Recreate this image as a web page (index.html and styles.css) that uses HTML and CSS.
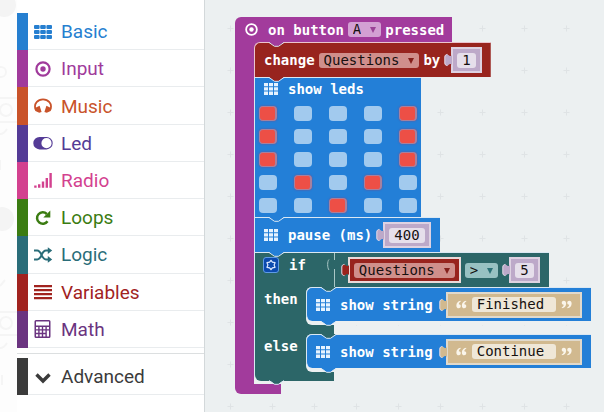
FILE: index.html
```html
<!DOCTYPE html>
<html lang="en">
<head>
<meta charset="utf-8">
<title>Block editor</title>
<link rel="stylesheet" href="styles.css">
</head>
<body>
<svg class="defs" aria-hidden="true">
  <defs>
    <symbol id="grid" viewBox="0 0 18 14">
      <path d="M1 0h3.600a1 1 0 0 1 1 1v2a1 1 0 0 1-1 1H1a1 1 0 0 1-1-1V1a1 1 0 0 1 1-1zm6.200 0h3.600a1 1 0 0 1 1 1v2a1 1 0 0 1-1 1H7.200a1 1 0 0 1-1-1V1a1 1 0 0 1 1-1zm6.200 0H17a1 1 0 0 1 1 1v2a1 1 0 0 1-1 1h-3.600a1 1 0 0 1-1-1V1a1 1 0 0 1 1-1zM1 5h3.600a1 1 0 0 1 1 1v2a1 1 0 0 1-1 1H1a1 1 0 0 1-1-1V6a1 1 0 0 1 1-1zm6.200 0h3.600a1 1 0 0 1 1 1v2a1 1 0 0 1-1 1H7.200a1 1 0 0 1-1-1V6a1 1 0 0 1 1-1zm6.200 0H17a1 1 0 0 1 1 1v2a1 1 0 0 1-1 1h-3.600a1 1 0 0 1-1-1V6a1 1 0 0 1 1-1zM1 10h3.600a1 1 0 0 1 1 1v2a1 1 0 0 1-1 1H1a1 1 0 0 1-1-1v-2a1 1 0 0 1 1-1zm6.200 0h3.600a1 1 0 0 1 1 1v2a1 1 0 0 1-1 1H7.200a1 1 0 0 1-1-1v-2a1 1 0 0 1 1-1zm6.200 0H17a1 1 0 0 1 1 1v2a1 1 0 0 1-1 1h-3.600a1 1 0 0 1-1-1v-2a1 1 0 0 1 1-1z"/>
    </symbol>
    <symbol id="cells" viewBox="0 0 14 12">
      <path d="M0 0h4v3.300H0zM5 0h4v3.300H5zM10 0h4v3.300h-4zM0 4.300h4v3.300H0zM5 4.300h4v3.300H5zM10 4.300h4v3.300h-4zM0 8.600h4V12H0zM5 8.600h4V12H5zM10 8.600h4V12h-4z"/>
    </symbol>
    <symbol id="target" viewBox="0 0 16 16">
      <circle cx="8" cy="8" r="6.600" fill="none" stroke="currentColor" stroke-width="2.200"/>
      <circle cx="8" cy="8" r="2.700"/>
    </symbol>
    <symbol id="notch" viewBox="0 0 17 5">
      <path d="M1 0L6.500 4H10.500L16 0z"/>
      <path class="notch-line" d="M1 .5L6.500 4.300H10.500L16 .5"/>
    </symbol>
    <symbol id="plug" viewBox="0 0 8 14">
      <path d="M8 1.500V12.500C7.500 10.500 5.500 10.500 4.500 12C2.500 13.500 .8 12 .8 10V4C.8 2 2.500 .5 4.500 2C5.500 3.500 7.500 3.500 8 1.500z"/>
      <path class="plug-line" d="M3.500 12.600C1.800 12.600 .8 11.500 .8 10V4C.8 2.500 1.800 1.400 3.500 1.400"/>
    </symbol>
    <symbol id="open-quote" viewBox="0 0 12 9">
      <path d="M5 .3C2 .8 .4 2.800 .4 5.500C.4 7.500 1.300 8.600 2.900 8.600C4.200 8.600 5.200 7.700 5.200 6.400C5.200 5.100 4.300 4.300 3.100 4.300C3.200 2.900 3.800 2 5.300 1.300zM11 .3C8 .8 6.400 2.800 6.400 5.500C6.400 7.500 7.300 8.600 8.900 8.600C10.200 8.600 11.200 7.700 11.200 6.400C11.200 5.100 10.300 4.300 9.100 4.300C9.200 2.900 9.800 2 11.300 1.300z"/>
    </symbol>
    <pattern id="crosses" x="4" y="7" width="42" height="42" patternUnits="userSpaceOnUse">
      <path d="M18.500 21.500h6M21.500 18.500v6" stroke="#dfe3e5" stroke-width="1" fill="none"/>
    </pattern>
  </defs>
</svg>

<div class="app">
  <div class="simulator" aria-hidden="true">
    <svg viewBox="0 0 17 412" width="17" height="412">
      <g fill="#f4f4f4">
        <circle cx="4" cy="5" r="12"/>
        <circle cx="2" cy="219" r="12"/>
      </g>
      <g fill="none" stroke="#f5f5f5" stroke-width="2">
        <circle cx="1" cy="72" r="5"/>
        <path d="M0 98h17M0 122h17M0 312h17M0 335h17M0 160v10M2 375v10"/>
        <circle cx="6" cy="110" r="6"/>
        <circle cx="6" cy="323" r="6"/>
        <path d="M0 134q4 0 7-5M0 348q4 0 7-5M0 286l5-6"/>
      </g>
    </svg>
  </div>

  <nav class="toolbox" aria-label="Block categories">
    <div class="categories">
      <button class="category basic"><svg class="icon" viewBox="-1 -2 20 18"><use href="#grid" width="18" height="14"/></svg>Basic</button>
      <button class="category input"><svg class="icon" viewBox="-2 -1 20 18"><use href="#target" width="16" height="16"/></svg>Input</button>
      <button class="category music"><svg class="icon" viewBox="0 0 20 18"><path d="M3.200 13.500C1.500 11.500 1.500 7.500 3.600 5.200C6.800 1.400 13.200 1.400 16.400 5.200C18.500 7.500 18.500 11.500 16.800 13.500" fill="none" stroke="currentColor" stroke-width="1.800"/><path d="M3 10.500L6.600 8.800L8.600 15L6.200 15.800L2.400 14zM17 10.500L13.400 8.800L11.400 15L13.800 15.800L17.600 14z"/></svg>Music</button>
      <button class="category led"><svg class="icon" viewBox="0 0 20 18"><path fill-rule="evenodd" d="M6.500 3h7a6.200 6.200 0 0 1 0 12.400h-7a6.200 6.200 0 0 1 0-12.400zM13.500 4.100a5.100 5.100 0 1 0 0 10.200a5.100 5.100 0 0 0 0-10.200z"/></svg>Led</button>
      <button class="category radio"><svg class="icon" viewBox="0 0 20 18"><path d="M1.200 14.500h2.400v2.200H1.200zM5 13.200h2.400v3.500H5zM8.800 10.500h2.400v6.200H8.800zM12.600 7h2.400v9.700h-2.400zM16.400 2h2.400v14.700h-2.400z"/></svg>Radio</button>
      <button class="category loops"><svg class="icon" viewBox="0 0 20 18"><path d="M14.500 12.200A5.700 5.700 0 1 1 13.800 5" fill="none" stroke="currentColor" stroke-width="2.500"/><path d="M17.300 1.500V8.400H10.300z"/></svg>Loops</button>
      <button class="category logic"><svg class="icon" viewBox="0 0 20 18"><path d="M1 4.600H4.200C8.800 4.600 8.200 13.400 13 13.400H15.500M1 13.400H4.200C8.800 13.400 8.200 4.600 13 4.600H15.500" fill="none" stroke="currentColor" stroke-width="2"/><path d="M14.800 1.300L19.200 4.600L14.800 7.900zM14.800 10.100L19.200 13.400L14.800 16.700z"/></svg>Logic</button>
      <button class="category variables"><svg class="icon" viewBox="0 0 20 18"><path d="M1 2h18v2.300H1zM1 6h18v2.300H1zM1 10h18v2.300H1zM1 14h18v2.300H1z"/></svg>Variables</button>
      <button class="category math"><svg class="icon" viewBox="0 0 20 18"><path fill-rule="evenodd" d="M3 0h13a1.500 1.500 0 0 1 1.500 1.500v15A1.500 1.500 0 0 1 16 18H3a1.500 1.500 0 0 1-1.500-1.500v-15A1.500 1.500 0 0 1 3 0zM3 1.500v4h13v-4zM3 7v2.200h2.200V7zM6.600 7v2.200h2.200V7zM10.200 7v2.200h2.200V7zM13.800 7v2.200H16V7zM3 10.600v2.200h2.200v-2.200zM6.600 10.600v2.200h2.200v-2.200zM10.200 10.600v2.200h2.200v-2.200zM3 14.300v2.200h2.200v-2.200zM6.600 14.300v2.200h2.200v-2.200zM10.200 14.300v2.200h2.200v-2.200zM13.800 10.600v5.900H16v-5.900z"/></svg>Math</button>
    </div>
    <div class="more">
      <button class="category advanced"><svg class="icon" viewBox="0 0 20 18"><path d="M3.500 6.500L10 13L16.500 6.500" fill="none" stroke="currentColor" stroke-width="3.400"/></svg>Advanced</button>
    </div>
  </nav>

  <main class="workspace">
    <svg class="backdrop" aria-hidden="true"><rect width="100%" height="100%" fill="url(#crosses)"/></svg>

    <section class="event">
      <div class="event-head">
        <svg class="head-icon" viewBox="0 0 16 16" aria-hidden="true"><use href="#target" width="16" height="16"/></svg>
        <span>on button</span>
        <span class="pick"><select class="field" aria-label="Button"><option>A</option></select></span>
        <span>pressed</span>
      </div>

      <div class="mouth event-body">
        <div class="block change">
          <svg class="notch from-event" aria-hidden="true"><use href="#notch"/></svg>
          <span>change</span>
          <span class="pick"><select class="field" aria-label="Variable to change"><option>Questions</option></select></span>
          <span>by</span>
          <span class="value number"><svg class="plug" aria-hidden="true"><use href="#plug"/></svg><span class="socket"><input class="field" type="text" value="1" aria-label="Change amount"></span></span>
        </div>

        <div class="leds">
          <svg class="notch from-change" aria-hidden="true"><use href="#notch"/></svg>
          <div class="leds-title"><svg class="cells" aria-hidden="true"><use href="#cells"/></svg><span>show leds</span></div>
          <div class="matrix">
            <input type="checkbox" aria-label="LED 0,0" checked><input type="checkbox" aria-label="LED 1,0"><input type="checkbox" aria-label="LED 2,0"><input type="checkbox" aria-label="LED 3,0"><input type="checkbox" aria-label="LED 4,0" checked>
            <input type="checkbox" aria-label="LED 0,1" checked><input type="checkbox" aria-label="LED 1,1"><input type="checkbox" aria-label="LED 2,1"><input type="checkbox" aria-label="LED 3,1"><input type="checkbox" aria-label="LED 4,1" checked>
            <input type="checkbox" aria-label="LED 0,2" checked><input type="checkbox" aria-label="LED 1,2"><input type="checkbox" aria-label="LED 2,2"><input type="checkbox" aria-label="LED 3,2"><input type="checkbox" aria-label="LED 4,2" checked>
            <input type="checkbox" aria-label="LED 0,3"><input type="checkbox" aria-label="LED 1,3" checked><input type="checkbox" aria-label="LED 2,3"><input type="checkbox" aria-label="LED 3,3" checked><input type="checkbox" aria-label="LED 4,3">
            <input type="checkbox" aria-label="LED 0,4"><input type="checkbox" aria-label="LED 1,4"><input type="checkbox" aria-label="LED 2,4" checked><input type="checkbox" aria-label="LED 3,4"><input type="checkbox" aria-label="LED 4,4">
          </div>
        </div>

        <div class="block action">
          <svg class="notch from-action" aria-hidden="true"><use href="#notch"/></svg>
          <svg class="cells" aria-hidden="true"><use href="#cells"/></svg>
          <span>pause (ms)</span>
          <span class="value number"><svg class="plug" aria-hidden="true"><use href="#plug"/></svg><span class="socket"><input class="field" type="text" value="400" aria-label="Pause in milliseconds"></span></span>
        </div>

        <div class="branch">
          <div class="block condition">
            <svg class="notch from-action" aria-hidden="true"><use href="#notch"/></svg>
            <span class="if-label">
              <button class="gear" aria-label="Edit branches"><svg viewBox="0 0 15 15" aria-hidden="true"><path d="M7.500 2.500L9 4.500L11.800 5L10.800 7.500L11.800 10L9 10.500L7.500 12.500L6 10.500L3.200 10L4.200 7.500L3.200 5L6 4.500z" fill="#0b4aae" stroke="#dce9ff" stroke-width="1.300" stroke-linejoin="round"/></svg></button>
              <span>if</span>
            </span>
            <svg class="slot" viewBox="0 0 10 34" aria-hidden="true"><path d="M9.500 0V7M9.500 16V34M4 6.500C2.200 8 2.200 15 4 17" fill="none" stroke="#a9c7c6" stroke-width="1"/></svg>
            <span class="value variable"><svg class="plug" aria-hidden="true"><use href="#plug"/></svg><span class="socket"><span class="pick"><select class="field" aria-label="Variable to compare"><option>Questions</option></select></span></span></span>
            <span class="pick compare"><select class="field" aria-label="Comparison"><option>&gt;</option></select></span>
            <span class="value number"><svg class="plug" aria-hidden="true"><use href="#plug"/></svg><span class="socket"><input class="field" type="text" value="5" aria-label="Compared number"></span></span>
          </div>

          <div class="arm">
            <span class="arm-label">then</span>
            <div class="mouth">
              <div class="block action">
                <svg class="notch from-branch" aria-hidden="true"><use href="#notch"/></svg>
                <svg class="cells" aria-hidden="true"><use href="#cells"/></svg>
                <span>show string</span>
                <span class="value string"><svg class="plug" aria-hidden="true"><use href="#plug"/></svg><span class="socket"><svg class="quote" aria-hidden="true"><use href="#open-quote"/></svg><input class="field" type="text" value="Finished" aria-label="String when true"><svg class="quote close" aria-hidden="true"><use href="#open-quote"/></svg></span></span>
              </div>
              <svg class="tab from-action" aria-hidden="true"><use href="#notch"/></svg>
            </div>
          </div>
          <div class="lip"></div>

          <div class="arm">
            <span class="arm-label">else</span>
            <div class="mouth">
              <div class="block action">
                <svg class="notch from-branch" aria-hidden="true"><use href="#notch"/></svg>
                <svg class="cells" aria-hidden="true"><use href="#cells"/></svg>
                <span>show string</span>
                <span class="value string"><svg class="plug" aria-hidden="true"><use href="#plug"/></svg><span class="socket"><svg class="quote" aria-hidden="true"><use href="#open-quote"/></svg><input class="field" type="text" value="Continue" aria-label="String when false"><svg class="quote close" aria-hidden="true"><use href="#open-quote"/></svg></span></span>
              </div>
              <svg class="tab from-action" aria-hidden="true"><use href="#notch"/></svg>
            </div>
          </div>
          <div class="lip last"></div>
        </div>
        <svg class="tab from-branch" aria-hidden="true"><use href="#notch"/></svg>
      </div>
      <div class="event-foot"></div>
    </section>
  </main>
</div>
</body>
</html>
```
FILE: styles.css
```css
:root {
  --purple: #a23b9c;
  --blue: #237fd7;
  --red: #98241e;
  --teal: #2c6668;
  --canvas: #ecf0f1;
}

* { box-sizing: border-box; }

body {
  margin: 0;
  background: #fdfdfd;
}

button, input, select { margin: 0; font: inherit; }

.defs { position: absolute; width: 0; height: 0; }

.app { display: flex; min-height: 100vh; overflow: hidden; }

.simulator { flex: none; width: 17px; height: 100vh; overflow: hidden; }
.simulator svg { display: block; }

/* Toolbox */
.toolbox {
  flex: none;
  width: 187px;
  padding-top: 13px;
  background: #fff;
  font-family: Roboto, "Liberation Sans", sans-serif;
  font-size: 19px;
}

.categories {
  display: grid;
  grid-auto-rows: 1fr;
  height: 335px;
}

.more {
  margin-top: 5px;
  padding-top: 4px;
  border-top: 1px solid #dcdfe0;
}

.category {
  display: flex;
  align-items: center;
  gap: 8px;
  width: 100%;
  min-height: 37px;
  padding: 0 6px 0 5px;
  border: 0;
  border-left: 11px solid var(--tone);
  background: linear-gradient(#e9ecee, #e9ecee) bottom / 100% 1px no-repeat #fff;
  color: var(--tone);
  text-align: left;
}

.icon { width: 20px; height: 18px; fill: currentColor; }

.basic { --tone: #267fd0; }
.input { --tone: #a03a9b; }
.music { --tone: #c9532a; }
.led { --tone: #543b96; }
.radio { --tone: #d3418f; }
.loops { --tone: #3b7c12; }
.logic { --tone: #2a6d79; }
.variables { --tone: #a1231f; }
.math { --tone: #6b3480; }
.advanced { --tone: #3b3b3b; }

/* Workspace */
.workspace {
  position: relative;
  flex: 1;
  min-width: 0;
  padding: 17px 0 0 30px;
  border-left: 1px solid #d3d8da;
  background: var(--canvas);
  color: #fff;
  font: bold 14px/16px "DejaVu Sans Mono", monospace;
  white-space: nowrap;
}

.backdrop { position: absolute; inset: 0; width: 100%; height: 100%; }

.event {
  position: relative;
  display: flex;
  flex-direction: column;
  align-items: flex-start;
  width: max-content;
}

.event-head {
  display: flex;
  align-items: center;
  gap: 4px;
  height: 25px;
  padding: 0 8px 0 10px;
  border-radius: 6px 0 0 0;
  background: var(--purple);
}

.head-icon { width: 13px; height: 13px; margin-right: 6px; fill: currentColor; }

.event-body { border-left: 19px solid var(--purple); padding-bottom: 3px; }
.event-foot { width: 46px; height: 10px; border-radius: 0 0 0 6px; background: var(--purple); }

.mouth {
  position: relative;
  display: flex;
  flex-direction: column;
  align-items: flex-start;
}

.block {
  position: relative;
  display: flex;
  align-items: center;
  gap: 4px;
  height: 35px;
  padding: 0 9px;
  border-top: 1px solid #dbe8f3;
  border-left: 1px solid #dbe8f3;
}

.change {
  background: var(--red);
  border-color: #ecc4cf;
  border-top-left-radius: 6px;
  box-shadow: -3px -3px 0 var(--purple);
  clip-path: inset(0);
}
.action { background: var(--blue); }

.cells { flex: none; width: 14px; height: 12px; margin-right: 6px; fill: #e6f3ff; }

.notch, .tab { position: absolute; width: 17px; height: 5px; }
.notch { left: 13px; top: -1px; }
.tab { left: 14px; bottom: -1px; }
.notch-line { fill: none; stroke: #dbe8f3; stroke-width: 1; }
.tab.from-action { color: var(--blue); }
.from-event { fill: var(--purple); }
.from-change { fill: var(--red); }
.from-action { fill: var(--blue); }
.from-branch { fill: var(--teal); }

/* Fields */
.field {
  display: block;
  height: 15px;
  padding: 0 5px;
  border: 0;
  border-radius: 3px;
  color: #16100f;
  font-weight: normal;
  line-height: 15px;
  field-sizing: content;
}

select.field { appearance: none; padding-right: 20px; background: #d08f8b; }

.pick { position: relative; --caret: #84201c; }
.pick::after {
  content: "";
  position: absolute;
  right: 5px;
  top: 5px;
  border: 3px solid transparent;
  border-top: 6px solid var(--caret);
  border-bottom: 0;
  pointer-events: none;
}

.event-head .pick { --caret: #9a4296; }
.event-head .field { background: #d3a0d3; }
.compare { --caret: #2c7177; }
.compare .field { background: #98c1c2; }

.value { display: flex; align-items: center; }
.plug { flex: none; width: 8px; height: 14px; margin-right: -1px; position: relative; fill: var(--fill); }
.plug-line { fill: none; stroke: #e5dce8; stroke-width: 1; }
.socket {
  display: flex;
  align-items: center;
  height: 26px;
  padding: 0 4px;
  border: 2px solid #ded2e2;
  background: var(--fill);
}

.number { --fill: #bda9c9; }
.number .field { background: #e6dfeb; }
.variable { --fill: #98231d; margin-left: 2px; }
.variable .socket { border-color: #eadada; }
.variable .plug-line { stroke: #c9625c; }
.string { --fill: #d1b98f; margin-left: 2px; }
.string .socket { gap: 5px; padding: 0 8px; border-color: #e0d9cc; }
.string .plug-line { stroke: #e2d5bb; }
.string .field { min-width: 84px; background: #efe7d8; }
.quote { width: 11px; height: 9px; fill: #faf5ea; }
.close { transform: rotate(180deg); }

/* LED matrix */
.leds {
  position: relative;
  padding: 3px 4px 4px;
  border-top: 1px solid #dbe8f3;
  border-left: 1px solid #dbe8f3;
  background: var(--blue);
}

.leds-title { display: flex; align-items: center; gap: 4px; height: 16px; margin: 0 0 9px 5px; }

.matrix { display: grid; grid-template-columns: repeat(5, 18px); gap: 8px 17px; }

.matrix input {
  appearance: none;
  width: 18px;
  height: 15px;
  border-radius: 4px;
  background: #a2caee;
}

.matrix input:checked {
  border: 1px solid #a6819f;
  border-right-width: 2px;
  background: #ed4f46;
  box-shadow: 0 0 2px #7a4b86;
}

/* Conditional block */
.branch {
  border-left: 1px solid #dbe8f3;
  border-radius: 0 0 0 6px;
}

.condition { width: max-content; padding-left: 8px; border-left: 0; background: var(--teal); }
.if-label { display: flex; gap: 10px; align-self: flex-start; padding-top: 4px; }
.gear { width: 16px; height: 16px; padding: 0; border: 1px solid #5f9be6; border-radius: 3px; background: #0b4aae; }
.gear svg { display: block; width: 14px; height: 14px; }
.slot { width: 10px; height: 34px; margin-left: 15px; }

.arm { display: flex; background: linear-gradient(var(--teal), var(--teal)) left / 60px 100% no-repeat; }
.arm-label { flex: none; width: 51px; padding: 4px 0 0 9px; }
.arm .mouth { padding-bottom: 4px; background: var(--canvas); border-radius: 6px 0 0 6px; }
.arm .block { height: 34px; border-radius: 6px 0 0 6px; }
.lip { width: 79px; height: 9px; background: var(--teal); }
.last { border-radius: 0 0 0 6px; }
```
